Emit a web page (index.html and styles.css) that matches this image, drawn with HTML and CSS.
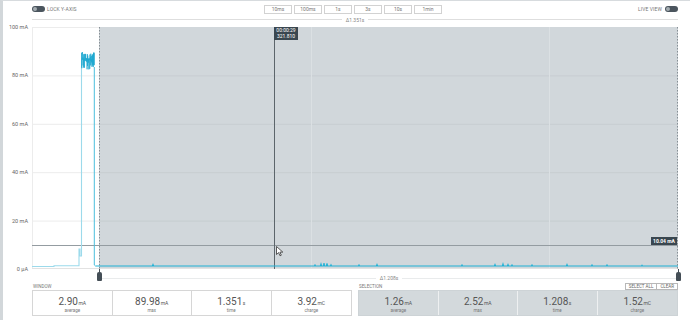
FILE: index.html
```html
<!DOCTYPE html>
<html lang="en">
<head>
    <meta charset="UTF-8">
    <meta name="viewport" content="width=device-width, initial-scale=1.0">
    <title>Power Profiler</title>
    <link rel="stylesheet" href="styles.css">
</head>
<body>
    <div class="app">
        <div class="toolbar">
            <div class="toggle-group">
                <span class="toggle"><span class="knob"></span></span>
                <span class="toggle-label">Lock Y-axis</span>
            </div>
            <div class="zoom-buttons">
                <button>10ms</button>
                <button>100ms</button>
                <button>1s</button>
                <button>3s</button>
                <button>10s</button>
                <button>1min</button>
            </div>
            <div class="toggle-group right">
                <span class="toggle-label">Live view</span>
                <span class="toggle"><span class="knob"></span></span>
            </div>
        </div>

        <div class="span-row window-span"><span>Δ1.351s</span></div>

        <div class="chart">
            <div class="y-axis">
                <span>100 mA</span>
                <span>80 mA</span>
                <span>60 mA</span>
                <span>40 mA</span>
                <span>20 mA</span>
                <span>0 µA</span>
            </div>
            <div class="plot">
                <svg width="646" height="242" viewBox="0 0 646 242">
                    <rect x="67" y="0" width="579" height="242" fill="#d1d7db"/>
                    <g stroke="#ececec" stroke-width="1">
                        <line x1="0" y1="0.5" x2="67" y2="0.5"/>
                        <line x1="0" y1="48.9" x2="67" y2="48.9"/>
                        <line x1="0" y1="97.3" x2="67" y2="97.3"/>
                        <line x1="0" y1="145.7" x2="67" y2="145.7"/>
                        <line x1="0" y1="194.1" x2="67" y2="194.1"/>
                        <line x1="0.5" y1="0" x2="0.5" y2="242"/>
                    </g>
                    <g stroke="#c7cdd1" stroke-width="1">
                        <line x1="67" y1="48.9" x2="646" y2="48.9"/>
                        <line x1="67" y1="97.3" x2="646" y2="97.3"/>
                        <line x1="67" y1="145.7" x2="646" y2="145.7"/>
                        <line x1="67" y1="194.1" x2="646" y2="194.1"/>
                    </g>
                    <g stroke="#dbe0e3" stroke-width="1">
                        <line x1="279.5" y1="0" x2="279.5" y2="242"/>
                        <line x1="517.5" y1="0" x2="517.5" y2="242"/>
                    </g>
                    <line x1="0" y1="218.5" x2="646" y2="218.5" stroke="#949ca1"/>
                    <line x1="0" y1="241.5" x2="646" y2="241.5" stroke="#e2e2e2"/>
                    <line x1="242.5" y1="0" x2="242.5" y2="242" stroke="#5c656b"/>
                    <g stroke="#868f95" stroke-dasharray="1.5 1.5">
                        <line x1="67.5" y1="0" x2="67.5" y2="242"/>
                        <line x1="645.5" y1="0" x2="645.5" y2="242"/>
                    </g>
                    <path id="trace-light" fill="none" stroke="#9cdaeb" stroke-width="1.1"/>
                    <path id="trace-fall" fill="none" stroke="#4cbfdd" stroke-width="1"/>
                    <path id="trace-block" fill="none" stroke="#1ea8d0" stroke-width="0.7"/>
                    <path id="trace-base" fill="none" stroke="#22b2d6" stroke-width="1.2"/>
                </svg>
                <div class="cursor-label">00:00:29<br>321.810</div>
                <div class="level-label">10.04 mA</div>
                <svg class="pointer" width="8" height="11" viewBox="0 0 8 11">
                    <path d="M0.5 0.5 L0.5 8.5 L2.6 6.6 L4 9.8 L5.3 9.2 L3.9 6.1 L6.8 6.1 Z" fill="#fff" stroke="#333" stroke-width="0.8" stroke-linejoin="round"/>
                </svg>
            </div>
        </div>

        <div class="selection-bar">
            <span class="handle"></span>
            <div class="span-row"><span>Δ1.208s</span></div>
            <span class="handle"></span>
        </div>

        <div class="stats">
            <div class="stat-block">
                <div class="stat-head"><span>Window</span></div>
                <div class="stat-box">
                    <div class="stat"><div class="value">2.90<small>mA</small></div><div class="label">average</div></div>
                    <div class="stat"><div class="value">89.98<small>mA</small></div><div class="label">max</div></div>
                    <div class="stat"><div class="value">1.351<small>s</small></div><div class="label">time</div></div>
                    <div class="stat"><div class="value">3.92<small>mC</small></div><div class="label">charge</div></div>
                </div>
            </div>
            <div class="stat-block selection">
                <div class="stat-head">
                    <span>Selection</span>
                    <span class="head-buttons"><button>Select all</button><button>Clear</button></span>
                </div>
                <div class="stat-box">
                    <div class="stat"><div class="value">1.26<small>mA</small></div><div class="label">average</div></div>
                    <div class="stat"><div class="value">2.52<small>mA</small></div><div class="label">max</div></div>
                    <div class="stat"><div class="value">1.208<small>s</small></div><div class="label">time</div></div>
                    <div class="stat"><div class="value">1.52<small>mC</small></div><div class="label">charge</div></div>
                </div>
            </div>
        </div>
    </div>

    <script>
        // simple seeded random so the trace looks the same every time
        let seed = 12345;
        function rand() {
            seed = (seed * 16807) % 2147483647;
            return seed / 2147483647;
        }

        // idle current before the burst
        document.getElementById('trace-light').setAttribute('d',
            'M0 239.5 H22 V238.8 H47 V222 H48 V229 H49.5 V40');

        // falling edge after the burst
        document.getElementById('trace-fall').setAttribute('d', 'M62.3 40 V238 L63.5 239');

        // the ~90 mA burst, drawn as dense up/down strokes
        let block = 'M49.5 40';
        let up = true;
        for (let x = 49.6; x < 62.4; x += 0.22) {
            let y = up ? 25 + rand() * 7 : 32 + rand() * 11;
            up = !up;
            block += ' L' + x.toFixed(2) + ' ' + y.toFixed(1);
        }
        document.getElementById('trace-block').setAttribute('d', block);

        // sleep current with a few small blips
        const blips = [[121, 1.5], [283, 1], [289, 2], [292, 3], [295, 2.5], [299, 1.2], [327, 1], [345, 1.5],
            [430, 1], [463, 1.5], [471, 2], [476, 1.5], [480, 1], [500, 1], [535, 1.5], [560, 1], [575, 1], [610, 0.8]];
        let base = 'M63.5 239';
        blips.forEach(([x, h]) => {
            base += ' H' + (x - 0.6) + ' L' + x + ' ' + (239 - h) + ' L' + (x + 0.6) + ' 239';
        });
        base += ' H646';
        document.getElementById('trace-base').setAttribute('d', base);
    </script>
</body>
</html>
```

FILE: styles.css
```css
body {
    margin: 0;
    padding: 0;
    font-family: Roboto, 'Liberation Sans', sans-serif;
    background: #fff;
    color: #707070;
}

.app {
    width: 690px;
    height: 320px;
    box-sizing: border-box;
    border-top: 1px solid #d7dbde;
    border-left: 3px solid #d2d7da;
    overflow: hidden;
}


/* top toolbar */

.toolbar {
    margin-left: 29px;
    width: 646px;
    height: 13px;
    display: grid;
    grid-template-columns: 1fr auto 1fr;
    align-items: center;
}

.toggle-group {
    display: flex;
    align-items: center;
    gap: 2px;
    padding-top: 2px;
}

.toggle-group.right {
    justify-content: flex-end;
    gap: 3px;
}

.toggle {
    width: 13px;
    height: 6px;
    border-radius: 3px;
    background-color: #4b555e;
    display: flex;
    align-items: center;
    padding: 0 1px;
    box-sizing: border-box;
}

.knob {
    width: 4px;
    height: 4px;
    border-radius: 50%;
    background-color: #a5adb2;
}

.toggle-label {
    font-size: 5px;
    text-transform: uppercase;
    letter-spacing: 0.1px;
    color: #777;
}

.zoom-buttons {
    display: flex;
    gap: 2px;
    margin-right: 4px;
    padding-top: 3px;
}

.zoom-buttons button {
    width: 28px;
    height: 9px;
    padding: 0;
    border: 1px solid #d2d2d2;
    border-radius: 0;
    background: #fff;
    font-family: inherit;
    font-size: 5px;
    line-height: 7px;
    color: #777;
}


/* delta lines */

.span-row {
    display: flex;
    align-items: center;
    gap: 4px;
    height: 12px;
    font-size: 5px;
    color: #888;
}

.span-row::before,
.span-row::after {
    content: '';
    flex: 1;
    height: 1px;
    background-color: #dedede;
}

.window-span {
    margin-left: 29px;
    width: 646px;
    height: 11px;
}


/* chart */

.chart {
    display: flex;
    margin-top: 2px;
    height: 242px;
}

.y-axis {
    width: 29px;
    margin: -4px 0;
    display: flex;
    flex-direction: column;
    justify-content: space-between;
}

.y-axis span {
    height: 8px;
    line-height: 8px;
    font-size: 5.5px;
    text-align: right;
    padding-right: 4px;
    color: #666;
}

.plot {
    position: relative;
    width: 646px;
    height: 242px;
}

.plot svg {
    display: block;
}

.cursor-label {
    position: absolute;
    left: 242px;
    top: 0;
    width: 24px;
    padding: 1px 0;
    background-color: #3a4750;
    color: #fff;
    font-size: 5px;
    line-height: 5.5px;
    text-align: center;
}

.level-label {
    position: absolute;
    right: 1px;
    top: 210px;
    width: 26px;
    height: 8px;
    background-color: #3a4750;
    color: #fff;
    font-size: 5px;
    font-weight: bold;
    line-height: 8px;
    text-align: center;
}

.plot .pointer {
    position: absolute;
    left: 244px;
    top: 219px;
}


/* selection handles */

.selection-bar {
    margin-left: 94px;
    width: 584px;
    height: 14px;
    display: flex;
    align-items: flex-start;
}

.handle {
    position: relative;
    width: 5px;
    height: 9px;
    margin-top: 3px;
    border-radius: 2px 2px 1px 1px;
    background-color: #444e56;
}

.handle::before {
    content: '';
    position: absolute;
    left: 2px;
    top: -3px;
    width: 1px;
    height: 3px;
    background-color: #444e56;
}

.selection-bar .span-row {
    flex: 1;
    height: 8px;
    margin-top: 5px;
}

.selection-bar .span-row::before,
.selection-bar .span-row::after {
    background-color: #e9ebec;
}


/* stats */

.stats {
    margin-left: 29px;
    width: 646px;
    display: grid;
    grid-template-columns: 1fr 1fr;
    gap: 6px;
}

.stat-head {
    height: 7px;
    display: flex;
    justify-content: space-between;
    align-items: flex-end;
    font-size: 4.5px;
    line-height: 6px;
    text-transform: uppercase;
    color: #777;
    padding-left: 1px;
}

.head-buttons {
    display: flex;
}

.head-buttons button {
    height: 7px;
    padding: 0 3px;
    border: 1px solid #b8b8b8;
    border-radius: 0;
    background: #fff;
    font-family: inherit;
    font-size: 4.5px;
    line-height: 5px;
    text-transform: uppercase;
    color: #666;
}

.head-buttons button + button {
    border-left: none;
}

.stat-box {
    height: 26px;
    box-sizing: border-box;
    border: 1px solid #d6d6d6;
    display: grid;
    grid-template-columns: repeat(4, 1fr);
}

.stat {
    text-align: center;
    padding-top: 5px;
    border-right: 1px solid #d6d6d6;
}

.stat:last-child {
    border-right: none;
}

.stat .value {
    font-size: 10px;
    line-height: 12px;
    color: #555;
}

.stat .value small {
    font-size: 5px;
    margin-left: 0.5px;
}

.stat .label {
    font-size: 4.5px;
    line-height: 6px;
    margin-top: -1px;
    color: #777;
}

.selection .stat-box {
    background-color: #d3d9dc;
    border-color: #cdd3d6;
}

.selection .stat {
    border-right-color: #eef0f1;
}
```
